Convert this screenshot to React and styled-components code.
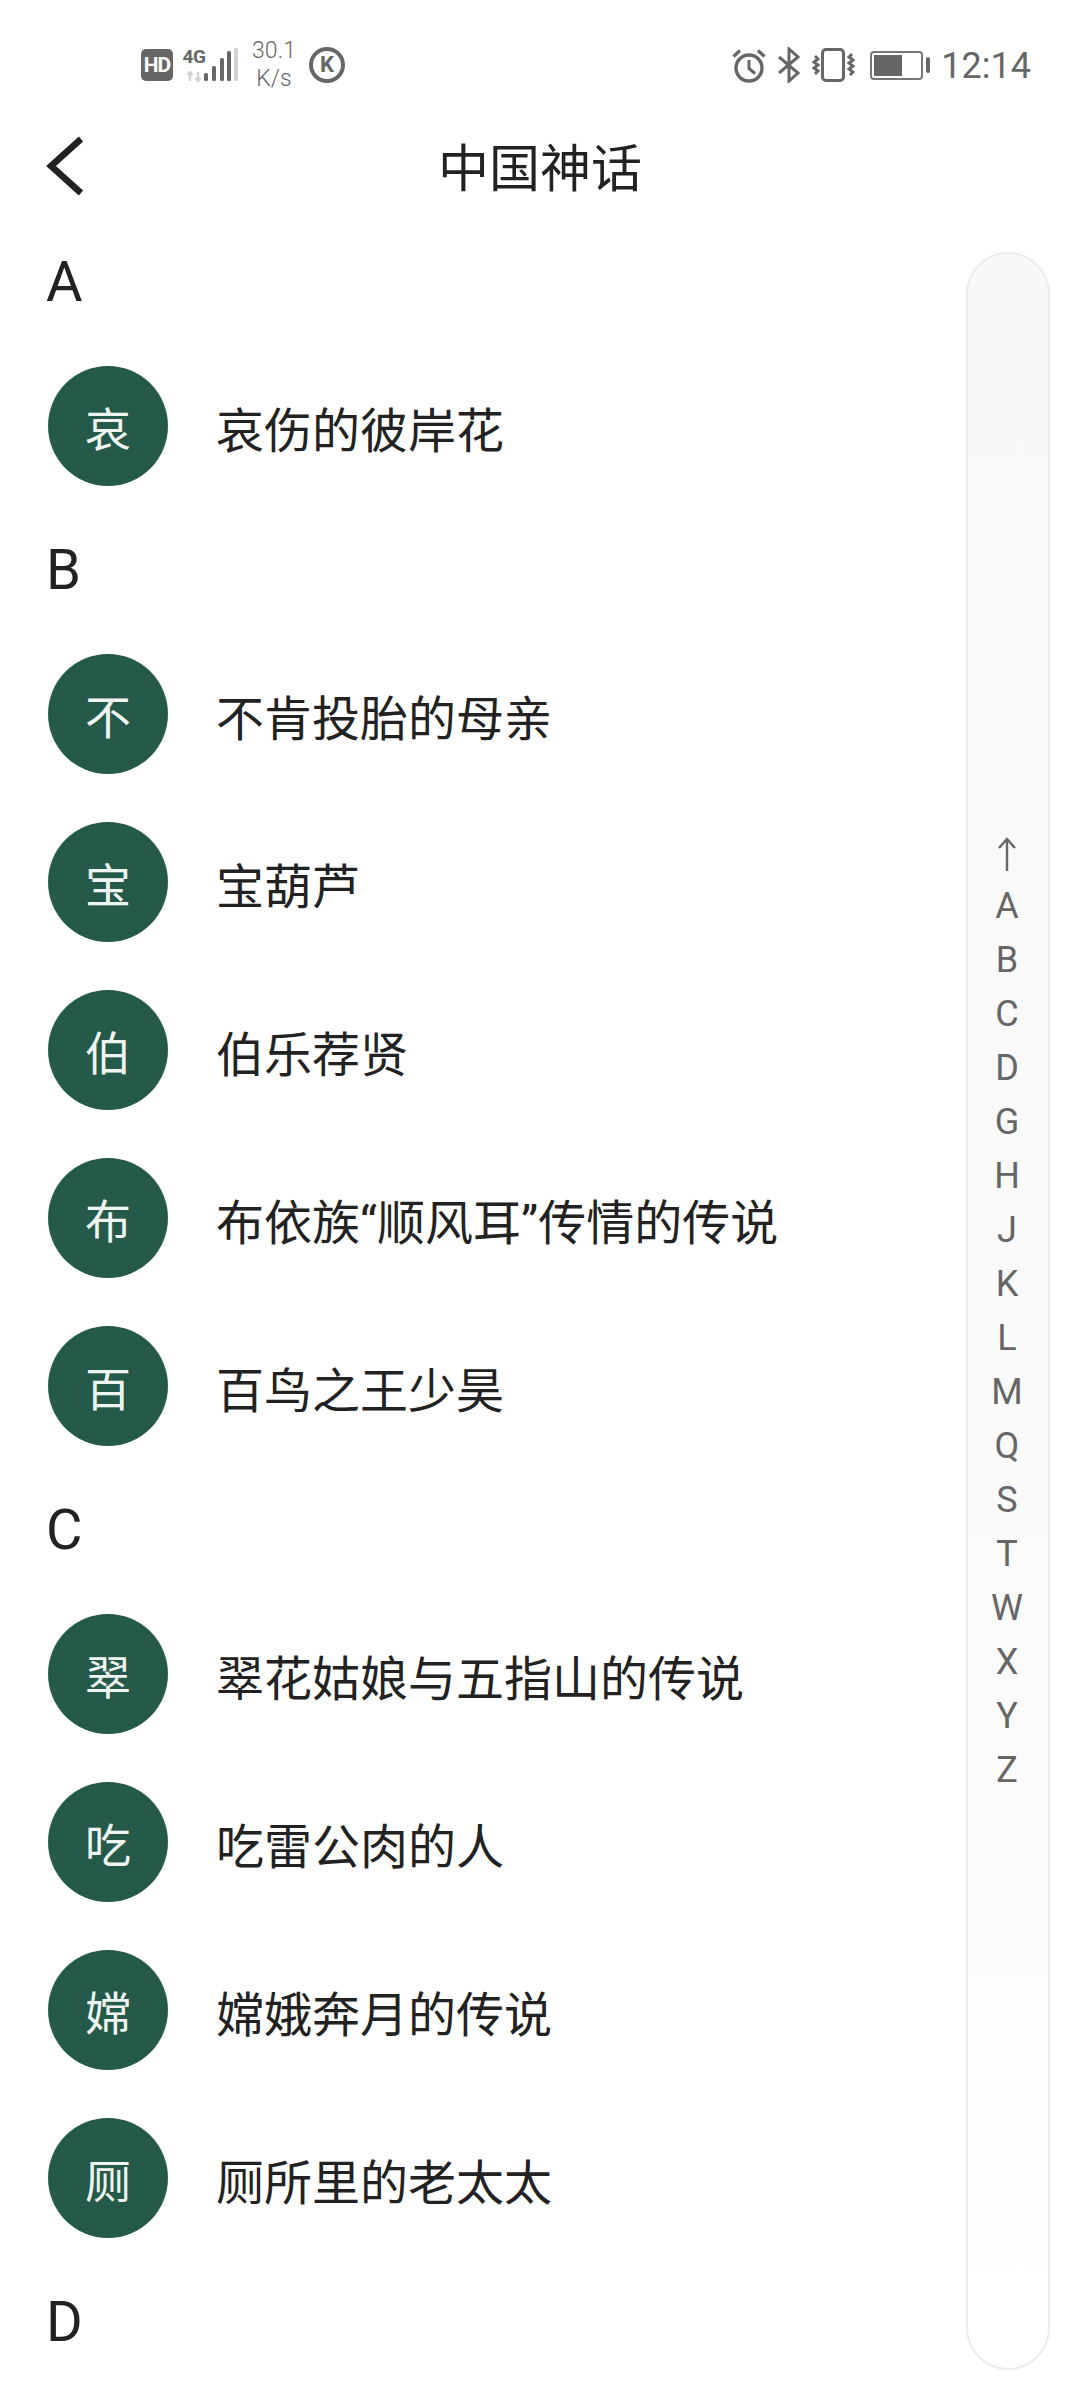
import React from "react";
import styled, { createGlobalStyle } from "styled-components";

const GlobalStyle = createGlobalStyle`
  html, body {
    margin: 0;
    padding: 0;
    background: #fff;
    font-family: Roboto, "Noto Sans CJK SC", sans-serif;
  }
`;

const sections = [
  { letter: "A", items: ["哀伤的彼岸花"] },
  {
    letter: "B",
    items: ["不肯投胎的母亲", "宝葫芦", "伯乐荐贤", "布依族“顺风耳”传情的传说", "百鸟之王少昊"],
  },
  {
    letter: "C",
    items: ["翠花姑娘与五指山的传说", "吃雷公肉的人", "嫦娥奔月的传说", "厕所里的老太太"],
  },
  { letter: "D", items: [] },
];

const indexLetters = "ABCDGHJKLMQSTWXYZ".split("");

function App() {
  return (
    <Page>
      <GlobalStyle />
      <StatusBar>
        <StatusGroup>
          <HdBadge>HD</HdBadge>
          <Network>
            <NetworkLabel>
              <NetworkType>4G</NetworkType>
              <svg width="20" height="11" viewBox="0 0 20 11">
                <path d="M6 1v9M3.5 4 6 1l2.5 3M14 10V1M11.5 7l2.5 3 2.5-3" fill="none" stroke="#d4d4d4" strokeWidth="2.4" />
              </svg>
            </NetworkLabel>
            <svg width="34" height="34" viewBox="0 0 34 34">
              <rect x="0" y="25" width="4" height="8" rx="1.5" fill="#666" />
              <rect x="8" y="18" width="4" height="15" rx="1.5" fill="#666" />
              <rect x="16" y="10" width="4" height="23" rx="1.5" fill="#666" />
              <rect x="23" y="3" width="4" height="30" rx="1.5" fill="#666" />
              <rect x="30" y="0" width="4" height="33" rx="1.5" fill="#d2d2d2" />
            </svg>
          </Network>
          <Speed>
            <span>30.1</span>
            <span>K/s</span>
          </Speed>
          <KBadge>K</KBadge>
        </StatusGroup>
        <StatusGroup $gap={12}>
          <svg width="34" height="35" viewBox="0 0 34 35" fill="none" stroke="#666">
            <circle cx="17" cy="20" r="13" strokeWidth="3.4" />
            <path d="M17 12v8.5l6 5" strokeWidth="3" />
            <path d="M1.5 8.5 8 2.5M32.5 8.5 26 2.5" strokeWidth="3.2" />
          </svg>
          <svg width="22" height="36" viewBox="0 0 22 36" fill="none" stroke="#666" strokeWidth="3">
            <path d="M1 10l19 16-9 8V2l9 8L1 26" />
          </svg>
          <svg width="43" height="34" viewBox="0 0 43 34" fill="none" stroke="#666">
            <rect x="10.5" y="1.5" width="21" height="31" rx="3.5" strokeWidth="3" />
            <path d="M3 8l3 3-4 3 4 3-4 3 4 3-3 3M40 6l-3 3 4 3-4 3 4 3-4 3 4 3-3 3" strokeWidth="3" />
          </svg>
          <Battery>
            <BatteryBody>
              <BatteryLevel />
            </BatteryBody>
            <BatteryTip />
          </Battery>
          <Clock>12:14</Clock>
        </StatusGroup>
      </StatusBar>
      <NavBar>
        <BackButton>
          <svg width="38" height="60" viewBox="0 0 38 60" fill="none" stroke="#222" strokeWidth="6.5">
            <path d="M35 3 5 30l30 27" />
          </svg>
        </BackButton>
        <Title>中国神话</Title>
      </NavBar>
      {sections.map((section) => (
        <section key={section.letter}>
          <SectionHeader>{section.letter}</SectionHeader>
          {section.items.map((item) => (
            <Row key={item}>
              <Avatar>{item[0]}</Avatar>
              <RowText>{item}</RowText>
            </Row>
          ))}
        </section>
      ))}
      <IndexBar>
        <ArrowIcon width="18" height="34" viewBox="0 0 18 34" fill="none" stroke="#666" strokeWidth="2.4">
          <path d="M9 34V2M1 11l8-9 8 9" />
        </ArrowIcon>
        {indexLetters.map((letter) => (
          <IndexLetter key={letter}>{letter}</IndexLetter>
        ))}
      </IndexBar>
    </Page>
  );
}

export default App;

const Page = styled.div`
  position: relative;
  width: 1080px;
  height: 2400px;
  overflow: hidden;
  background: #fff;
`;

const StatusBar = styled.div`
  height: 130px;
  box-sizing: border-box;
  padding: 0 49px 0 141px;
  display: flex;
  align-items: center;
  justify-content: space-between;
  color: #666;
`;

const StatusGroup = styled.div`
  display: flex;
  align-items: center;
  gap: ${(props) => props.$gap || 11}px;
`;

const HdBadge = styled.div`
  width: 32px;
  height: 32px;
  border-radius: 5px;
  background: #666;
  color: #fff;
  font-size: 21px;
  font-weight: 700;
  line-height: 32px;
  text-align: center;
  letter-spacing: -1px;
`;

const Network = styled.div`
  display: flex;
  align-items: flex-end;
`;

const NetworkLabel = styled.div`
  width: 20px;
  display: flex;
  flex-direction: column;
  align-items: center;
  gap: 5px;
`;

const NetworkType = styled.span`
  font-size: 19px;
  line-height: 18px;
  font-weight: 700;
  color: #666;
  letter-spacing: -0.5px;
`;

const Speed = styled.div`
  width: 44px;
  margin-left: 3px;
  display: flex;
  flex-direction: column;
  align-items: center;
  font-size: 23px;
  line-height: 28px;
  font-weight: 300;
  color: #666;
`;

const KBadge = styled.div`
  width: 36px;
  height: 36px;
  box-sizing: border-box;
  border: 4px solid #666;
  border-radius: 50%;
  margin-left: 2px;
  color: #666;
  font-size: 22px;
  font-weight: 700;
  line-height: 28px;
  text-align: center;
`;

const Battery = styled.div`
  display: flex;
  align-items: center;
  gap: 3px;
  margin-left: 3px;
`;

const BatteryBody = styled.div`
  width: 53px;
  height: 29px;
  box-sizing: border-box;
  border: 2px solid #777;
  border-radius: 4px;
  padding: 2px;
`;

const BatteryLevel = styled.div`
  width: 28px;
  height: 100%;
  background: #666;
`;

const BatteryTip = styled.div`
  width: 4px;
  height: 16px;
  border-radius: 2px;
  background: #666;
`;

const Clock = styled.div`
  margin: 2px 0 0 -1px;
  font-size: 36px;
  line-height: 36px;
  color: #666;
`;

const NavBar = styled.div`
  position: relative;
  height: 92px;
  box-sizing: border-box;
  padding: 0 46px 12px;
  display: flex;
  align-items: center;
  justify-content: center;
`;

const BackButton = styled.div`
  position: absolute;
  left: 46px;
  top: 6px;
  display: flex;
`;

const Title = styled.h1`
  margin: 0;
  font-size: 51px;
  line-height: 60px;
  font-weight: 400;
  color: #222;
`;

const SectionHeader = styled.div`
  height: 120px;
  box-sizing: border-box;
  padding-left: 46px;
  font-size: 56px;
  line-height: 120px;
  font-weight: 400;
  color: #222;
`;

const Row = styled.div`
  height: 168px;
  box-sizing: border-box;
  padding: 24px 48px;
  display: flex;
  align-items: center;
  gap: 48px;
`;

const Avatar = styled.div`
  flex: none;
  width: 120px;
  height: 120px;
  border-radius: 50%;
  background: #25594a;
  color: #eef5f1;
  font-size: 46px;
  line-height: 128px;
  text-align: center;
`;

const RowText = styled.div`
  font-size: 48px;
  line-height: 60px;
  color: #222;
  margin-top: 12px;
`;

const IndexBar = styled.div`
  position: absolute;
  left: 966px;
  top: 252px;
  width: 84px;
  height: 2118px;
  box-sizing: border-box;
  padding: 12px 2px 0 0;
  border: 2px solid #ececec;
  border-radius: 42px;
  background: linear-gradient(#f8f8f8, #fafafa 60%, #ffffff);
  display: flex;
  flex-direction: column;
  align-items: center;
  justify-content: center;
`;

const ArrowIcon = styled.svg`
  margin-bottom: 8px;
`;

const IndexLetter = styled.div`
  height: 54px;
  font-size: 36px;
  line-height: 54px;
  color: #666;
`;
